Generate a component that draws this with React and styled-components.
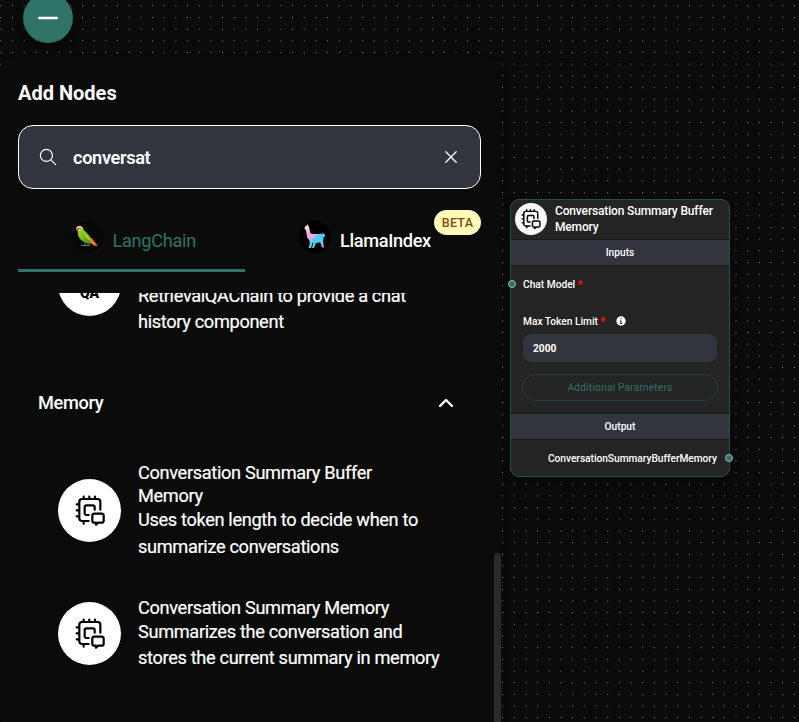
import React from 'react';
import styled, { createGlobalStyle } from 'styled-components';

const GlobalStyle = createGlobalStyle`
  * { box-sizing: border-box; }
  body { margin: 0; background: #0b0b0b; overflow: hidden; font-family: Roboto, "Liberation Sans", sans-serif; color: #fff; }
`;

const Canvas = styled.main`
  position: relative;
  width: 799px;
  height: 722px;
  overflow: hidden;
  background: #0b0b0b;
`;
const DotGrid = styled.svg`
  position: absolute;
  inset: 0;
  width: 100%;
  height: 100%;
`;
const Fab = styled.button`
  position: absolute;
  left: 23px;
  top: -7px;
  width: 50px;
  height: 50px;
  border: 0;
  padding: 0;
  border-radius: 50%;
  background: #2f7369;
  display: grid;
  place-items: center;
  box-shadow: 0 3px 5px rgba(0, 0, 0, 0.3), 0 6px 10px rgba(0, 0, 0, 0.2);
`;
const Panel = styled.aside`
  position: absolute;
  left: 0;
  top: 57px;
  width: 501px;
  height: 675px;
  border-radius: 15px;
  background: #0b0b0b;
  display: flex;
  flex-direction: column;
  box-shadow: 0 2px 6px rgba(0, 0, 0, 0.15);
`;
const PanelTitle = styled.h1`
  margin: 24px 0 0 18px;
  font-size: 20px;
  line-height: 24px;
  font-weight: 700;
  letter-spacing: 0;
`;
const SearchBox = styled.div`
  margin: 20px 0 0 18px;
  width: 463px;
  height: 64px;
  flex: none;
  border: 1px solid #fff;
  border-radius: 15px;
  background: #32353d;
  display: flex;
  align-items: center;
  padding: 0 22px 0 20px;
`;
const Query = styled.span`
  flex: 1;
  margin-left: 16px;
  font-size: 18.2px;
  font-weight: 600;
  letter-spacing: -0.35px;
`;
const Tabs = styled.div`
  display: flex;
  flex: none;
  margin: 20px 0 0 18px;
  width: 463px;
  height: 63px;
`;
const Tab = styled.div`
  position: relative;
  width: ${(p) => (p.$active ? '227px' : '236px')};
  border-bottom: 3px solid ${(p) => (p.$active ? '#2f7369' : 'transparent')};
  color: ${(p) => (p.$active ? '#2f7369' : '#fff')};
  font-size: 18.2px;
  font-weight: ${(p) => (p.$active ? 400 : 500)};
  display: flex;
  align-items: center;
  gap: 9.5px;
  padding-left: ${(p) => (p.$active ? '53px' : '53.5px')};
`;
const Logo = styled.svg`
  width: 32px;
  height: 32px;
  flex: none;
  margin-top: -4px;
`;
const TabLabel = styled.span`
  margin-top: 2px;
  letter-spacing: ${(p) => p.$spacing};
`;
const Beta = styled.span`
  position: absolute;
  right: 0;
  top: 1px;
  width: 47px;
  height: 25px;
  border-radius: 13px;
  background: #fffbb8;
  color: #804a17;
  font-size: 12.5px;
  line-height: 26px;
  font-weight: 500;
  text-align: center;
  letter-spacing: 0.3px;
`;
const ScrollArea = styled.div`
  margin-top: 21px;
  height: 429px;
  overflow: hidden;
  display: flex;
  justify-content: space-between;
`;
const List = styled.div`
  width: 480px;
`;
const Item = styled.div`
  display: flex;
  align-items: center;
  padding-left: 58px;
  height: ${(p) => p.$height};
  margin-top: ${(p) => p.$top};
`;
const Avatar = styled.div`
  width: 63px;
  height: 63px;
  flex: none;
  border-radius: 50%;
  background: #fff;
  color: #000;
  display: grid;
  place-items: center;
  font-size: 14px;
  font-weight: 900;
`;
const QaText = styled.span`
  margin-top: 16px;
`;
const ItemText = styled.div`
  margin-left: 17px;
  font-size: 18.2px;
  letter-spacing: -0.34px;
  white-space: nowrap;
  -webkit-text-stroke: 0.2px #fff;
`;
const Name = styled.div`
  line-height: 23px;
`;
const Description = styled.div`
  line-height: 26.2px;
`;
const Category = styled.div`
  display: flex;
  align-items: center;
  justify-content: space-between;
  height: 30px;
  margin-top: 51px;
  padding: 0 26px 0 38px;
  font-size: 18.2px;
  font-weight: 500;
  letter-spacing: -0.35px;
`;
const Chevron = styled.svg`
  margin-top: 1px;
`;
const ScrollThumb = styled.div`
  width: 7px;
  height: 180px;
  margin-top: 260px;
  border-radius: 4px;
  background: #2a2a2a;
`;

const Node = styled.section`
  position: absolute;
  left: 510px;
  top: 199px;
  width: 220px;
  height: 278px;
  border: 1px solid #23524c;
  border-radius: 9px;
  background: #242424;
  box-shadow: 0 2px 8px rgba(0, 0, 0, 0.4);
  display: flex;
  flex-direction: column;
  font-size: 10.2px;
  font-weight: 500;
`;
const NodeHeader = styled.header`
  display: flex;
  align-items: center;
  height: 39px;
  padding-left: 4px;
`;
const NodeAvatar = styled.div`
  width: 32px;
  height: 32px;
  margin-top: -1px;
  border-radius: 50%;
  background: #f7f7f7;
`;
const NodeTitle = styled.div`
  margin-left: 8px;
  font-size: 12px;
  letter-spacing: -0.15px;
  line-height: 16px;
  margin-top: -1px;
  white-space: nowrap;
`;
const Band = styled.div`
  height: 27px;
  margin-top: ${(p) => p.$top || '0'};
  border: 1px solid #181819;
  border-width: 1px 0;
  background: #32353d;
  text-align: center;
  line-height: 25px;
`;
const Field = styled.div`
  position: relative;
  display: flex;
  align-items: center;
  height: 14px;
  margin: ${(p) => p.$margin};
  justify-content: ${(p) => (p.$end ? 'flex-end' : 'flex-start')};
  letter-spacing: ${(p) => (p.$end ? '-0.03px' : '0')};
`;
const Star = styled.span`
  color: #f01010;
  margin-left: 2.5px;
  -webkit-text-stroke: 0.3px #f01010;
`;
const Port = styled.i`
  position: absolute;
  top: 3px;
  ${(p) => (p.$right ? 'right: -15.7px;' : 'left: -15.4px;')}
  width: 8px;
  height: 8px;
  border-radius: 50%;
  border: 1px solid #a5b5b2;
  background: #2f7369;
`;
const InfoIcon = styled.svg`
  width: 10px;
  height: 10px;
  margin-left: 11.5px;
`;
const NumberInput = styled.div`
  margin: 6px 12px 0;
  height: 28px;
  border-radius: 8px;
  background: #32353d;
  padding-left: 10px;
  line-height: 29px;
  font-weight: 700;
`;
const ParamsButton = styled.button`
  margin: 12px 11px 0;
  height: 27px;
  padding: 0;
  border: 1px solid #24443f;
  border-radius: 14px;
  background: transparent;
  color: #2f7369;
  font: 400 10.2px Roboto, sans-serif;
  letter-spacing: 0.2px;
`;

const ChipIcon = ({ viewBox = '54 296 189 189' }) => (
  <svg width="100%" height="100%" viewBox={viewBox} fill="none" stroke="#000" strokeWidth="6.6" strokeLinecap="round" strokeLinejoin="round">
    <path d="M181 388V364q0-8-8-8H126q-8 0-8 8v50q0 8 8 8h20M131 349v7M148 349v7M165 349v7M110 372h8M110 390h8M110 408h8M131 422v8" />
    <path d="M146 404H139q-5 0-5-5V380q0-5 5-5h20q5 0 5 5v8" />
    <path d="M163 400h22q6 0 6 6v15q0 6-6 6h-11l-6 6v-6h-5q-6 0-6-6v-15q0-6 6-6Z" />
  </svg>
);

const Parrot = () => (
  <Logo viewBox="0 0 32 32">
    <defs>
      <linearGradient id="feathers" x1="0" y1="0" x2="1" y2="1">
        <stop offset="0" stopColor="#b4dc28" />
        <stop offset=".5" stopColor="#7dbb25" />
        <stop offset="1" stopColor="#357d23" />
      </linearGradient>
    </defs>
    <circle cx="16" cy="16" r="16" fill="#050806" />
    <path d="M10 24.500h9M14 21v4M17 22v3" stroke="#77726a" fill="none" />
    <path d="M18 16.500 21 17l5.500 7.500-1 1-4-2-4-4Z" fill="#e8491d" />
    <path d="M5.500 9Q6 5 9 5q3 0 3.500 3.500L18 14l4 7-1.500 2q-6-.5-10.500-4-4-4-3-10Z" fill="url(#feathers)" />
    <path d="m13 11 4 4 3.500 6-5-4Z" fill="#a9d62b" />
    <path d="m18 16 3 5 3 3" stroke="#f79626" strokeWidth="1.400" fill="none" />
    <path d="M5.500 9Q4 5.500 8 5q3 0 3 2.500L8 10Z" fill="#e8d78b" />
    <path d="M6 7h2l-1 3.500q-2-1-1-3.500Z" fill="#d33c22" />
    <circle cx="9" cy="7.400" r=".7" fill="#312d18" />
  </Logo>
);

const Llama = () => (
  <Logo viewBox="0 0 32 32">
    <defs>
      <linearGradient id="fleece" x1="7" y1="5" x2="26" y2="24" gradientUnits="userSpaceOnUse">
        <stop offset="0" stopColor="#fff0d0" />
        <stop offset=".25" stopColor="#f4a8df" />
        <stop offset=".46" stopColor="#eaa6ed" />
        <stop offset=".58" stopColor="#49d1ed" />
        <stop offset=".78" stopColor="#48cfed" />
        <stop offset="1" stopColor="#d78bed" />
      </linearGradient>
    </defs>
    <circle cx="16" cy="16" r="16" fill="#000" />
    <path d="M6 5.500 7.500 5 8.500 3l1.500 3 1.500 6.500 3.500.5h7l2-.7 2 1.200-.5 3-1-.5-.3 4 .7 6.500h-2l-1.200-4-.8-1-4 .5-.7 2-1.300 3h-2l1.200-4-.6-2-.7 4-1 2H9.700l1-4-.2-3.500L8 16 7 9l-1.500-1Z" fill="url(#fleece)" />
  </Logo>
);

export default function App() {
  return (
    <>
      <GlobalStyle />
      <Canvas>
        <DotGrid>
          <defs>
            <pattern id="dots" x="0.3" y="5.25" width="11.67" height="11.67" patternUnits="userSpaceOnUse">
              <circle cx=".6" cy=".6" r=".5" fill="#aaa" />
            </pattern>
          </defs>
          <rect width="100%" height="100%" fill="url(#dots)" />
        </DotGrid>

        <Node>
          <NodeHeader>
            <NodeAvatar><ChipIcon viewBox="78 318 145 145" /></NodeAvatar>
            <NodeTitle>Conversation Summary Buffer<br />Memory</NodeTitle>
          </NodeHeader>
          <Band>Inputs</Band>
          <Field $margin="11px 12px 0"><Port />Chat Model<Star>*</Star></Field>
          <Field $margin="23px 12px 0">
            Max Token Limit<Star>*</Star>
            <InfoIcon viewBox="0 0 10 10">
              <circle cx="5" cy="5" r="4.700" fill="#fff" />
              <path d="M5 2.200v1.200M4.200 4.700H5v2.800M4 7.500h2" stroke="#222" fill="none" />
            </InfoIcon>
          </Field>
          <NumberInput>2000</NumberInput>
          <ParamsButton>Additional Parameters</ParamsButton>
          <Band $top="12px">Output</Band>
          <Field $end $margin="11px 12px 0">ConversationSummaryBufferMemory<Port $right /></Field>
        </Node>

        <Panel>
          <PanelTitle>Add Nodes</PanelTitle>
          <SearchBox>
            <svg width="18" height="18" viewBox="0 0 18 18" fill="none" stroke="#fff" strokeWidth="1.200" strokeLinecap="round">
              <circle cx="7.400" cy="7.400" r="6" /><path d="m11.900 11.900 4.700 4.700" />
            </svg>
            <Query>conversat</Query>
            <svg width="14" height="14" viewBox="0 0 14 14" fill="none" stroke="#fff" strokeWidth="1.300" strokeLinecap="round">
              <path d="m1.800 1.800 10.400 10.400m0-10.400-10.400 10.400" />
            </svg>
          </SearchBox>
          <Tabs>
            <Tab $active><Parrot /><TabLabel $spacing="-0.3px">LangChain</TabLabel></Tab>
            <Tab><Llama /><TabLabel $spacing="-0.35px">LlamaIndex</TabLabel><Beta>BETA</Beta></Tab>
          </Tabs>
          <ScrollArea>
            <List>
              <Item $top="-60px" $height="103px">
                <Avatar><QaText>QA</QaText></Avatar>
                <ItemText>
                  <Name>Conversational Retrieval QA Chain</Name>
                  <Description>Document QA - built on<br />RetrievalQAChain to provide a chat<br />history component</Description>
                </ItemText>
              </Item>
              <Category>
                Memory
                <Chevron width="16" height="10" viewBox="0 0 16 10" fill="none" stroke="#fff" strokeWidth="2.400" strokeLinecap="round" strokeLinejoin="round">
                  <path d="m2 8 6-6 6 6" />
                </Chevron>
              </Category>
              <Item $top="44px" $height="99px">
                <Avatar><ChipIcon /></Avatar>
                <ItemText>
                  <Name>Conversation Summary Buffer<br />Memory</Name>
                  <Description>Uses token length to decide when to<br />summarize conversations</Description>
                </ItemText>
              </Item>
              <Item $top="35.5px" $height="76px">
                <Avatar><ChipIcon /></Avatar>
                <ItemText>
                  <Name>Conversation Summary Memory</Name>
                  <Description>Summarizes the conversation and<br />stores the current summary in memory</Description>
                </ItemText>
              </Item>
            </List>
            <ScrollThumb />
          </ScrollArea>
        </Panel>
        <Fab aria-label="Close">
          <svg width="24" height="6" viewBox="0 0 24 6"><path d="M3.200 3h17.600" stroke="#fff" strokeWidth="2.600" strokeLinecap="round" /></svg>
        </Fab>
      </Canvas>
    </>
  );
}
